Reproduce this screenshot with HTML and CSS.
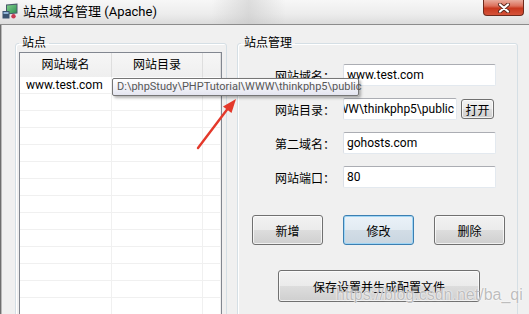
FILE: index.html
```html
<!DOCTYPE html>
<html lang="zh-CN">
<head>
<meta charset="UTF-8" />
<title>站点域名管理 (Apache)</title>
<link rel="stylesheet" href="styles.css">
</head>
<body>

<div class="window">
  <header class="titlebar">
    <svg class="app-icon" viewBox="0 0 16 16" aria-hidden="true">
      <defs>
        <linearGradient id="scr" x1="0" y1="0" x2="1" y2="1">
          <stop offset="0" stop-color="#7fd08a" />
          <stop offset="1" stop-color="#2f8f52" />
        </linearGradient>
      </defs>
      <path d="M4 1.5 L15.5 0.5 L15.5 10.5 L4 11.5 Z" fill="#4a5a6a" />
      <path d="M5 2.6 L14.5 1.8 L14.5 9.6 L5 10.4 Z" fill="url(#scr)" />
      <path d="M0.5 8 h7 v7.5 h-7 z" fill="#3a5470" />
      <path d="M1.5 9 h5 v2 h-5 z" fill="#8fb3d6" />
      <circle cx="11.5" cy="13.2" r="2.2" fill="#c93a52" />
    </svg>
    <span class="title">站点域名管理 (Apache)</span>
    <button class="close-btn" aria-label="关闭">
      <svg viewBox="0 0 14 10" aria-hidden="true">
        <path d="M3 1.5 L11 8.5 M11 1.5 L3 8.5" stroke="#5a2a20" stroke-width="4" stroke-linecap="round" />
        <path d="M3 1.5 L11 8.5 M11 1.5 L3 8.5" stroke="#fff" stroke-width="2.2" stroke-linecap="round" />
      </svg>
    </button>
  </header>

  <div class="client">
    <fieldset class="group sites">
      <legend>站点</legend>
      <div class="listview">
        <div class="lv-header">
          <span>网站域名</span>
          <span>网站目录</span>
          <span></span>
        </div>
        <div class="lv-row"><span>www.test.com</span><span></span><span></span></div>
        <div class="lv-row"><span></span><span></span><span></span></div>
        <div class="lv-row"><span></span><span></span><span></span></div>
        <div class="lv-row"><span></span><span></span><span></span></div>
        <div class="lv-row"><span></span><span></span><span></span></div>
        <div class="lv-row"><span></span><span></span><span></span></div>
        <div class="lv-row"><span></span><span></span><span></span></div>
        <div class="lv-row"><span></span><span></span><span></span></div>
        <div class="lv-row"><span></span><span></span><span></span></div>
        <div class="lv-row"><span></span><span></span><span></span></div>
        <div class="lv-row"><span></span><span></span><span></span></div>
        <div class="lv-row"><span></span><span></span><span></span></div>
        <div class="lv-row"><span></span><span></span><span></span></div>
        <div class="lv-row"><span></span><span></span><span></span></div>
      </div>
    </fieldset>

    <fieldset class="group manage">
      <legend>站点管理</legend>
      <div class="form">
        <div class="form-row">
          <label>网站域名：</label>
          <div class="textbox">www.test.com</div>
        </div>
        <div class="form-row">
          <label>网站目录：</label>
          <div class="field-group">
            <div class="textbox short"><span>D:\phpStudy\PHPTutorial\WWW\thinkphp5\public</span></div>
            <button class="btn open-btn">打开</button>
          </div>
        </div>
        <div class="form-row">
          <label>第二域名：</label>
          <div class="textbox">gohosts.com</div>
        </div>
        <div class="form-row">
          <label>网站端口：</label>
          <div class="textbox">80</div>
        </div>
      </div>

      <div class="actions">
        <button class="btn">新增</button>
        <button class="btn focused">修改</button>
        <button class="btn">删除</button>
      </div>

      <div class="save-row">
        <button class="btn save-btn">保存设置并生成配置文件</button>
      </div>
    </fieldset>
  </div>

  <!-- tooltip over the list -->
  <div class="tooltip">D:\phpStudy\PHPTutorial\WWW\thinkphp5\public</div>

  <svg class="arrow" viewBox="0 0 529 314" aria-hidden="true">
    <path d="M198 148 L229 107" stroke="#e4392b" stroke-width="2.4" stroke-linecap="round" />
    <path d="M236 99 L231.5 113 L223 106.5 Z" fill="#e4392b" />
  </svg>

  <div class="watermark">https://blog.csdn.net/ba_qi</div>
</div>

</body>
</html>
```

FILE: styles.css
```css
* { box-sizing: border-box; }
body {
  margin: 0;
  font-family: Roboto, "Noto Sans CJK SC", sans-serif;
  font-size: 12px;
  color: #000;
  background: #f0f0f0;
}
.window {
  position: relative;
  width: 529px; height: 314px;
  overflow: hidden;
  background: #f0f0f0;
}
/* Title bar */
.titlebar {
  height: 25px;
  display: flex; align-items: flex-start;
  border-bottom: 1px solid #8c8c8c;
  background:
    linear-gradient(90deg, rgba(255,255,255,0) 40%, rgba(190,190,190,0.45) 47%, rgba(255,255,255,0) 54%),
    linear-gradient(#f7f7f7, #ececec 60%, #dcdcdc);
}
.app-icon { width: 16px; height: 16px; margin: 3px 0 0 2px; flex: none; }
.title {
  font-size: 13px; line-height: 17px;
  margin: 3px 0 0 5px;
  color: #000;
}
.close-btn {
  margin-left: auto; margin-right: 5px;
  width: 41px; height: 16px;
  padding: 0;
  border: 1px solid #6e2a1c; border-top: none;
  border-radius: 0 0 4px 4px;
  background: linear-gradient(#e9ab9c, #dc705b 40%, #c8381e 55%, #d5533a);
  display: flex; align-items: center; justify-content: center;
}
.close-btn svg { width: 14px; height: 10px; }
/* Client area */
.client {
  display: flex; gap: 10px;
  padding: 10px 0 0 15px;
  height: 289px;
  box-shadow: inset 1px 0 #6f6f6f, inset 2px 0 #b9b9b9;
}
.group {
  margin: 0;
  padding: 0 3px;
  border: 1px solid #d5dfe5;
  border-radius: 3px;
  box-shadow: inset 1px 1px #fff;
  min-width: 0;
}
.group legend {
  padding: 0 3px;
  font-size: 12px; line-height: 16px;
}
.sites { width: 212px; height: 300px; }
.manage { width: 281px; height: 300px; }
/* List view */
.listview {
  margin-top: 1px;
  width: 203px;
  border: 1px solid #828790;
  background: #fff;
  height: 300px;
}
.lv-header, .lv-row {
  display: grid;
  grid-template-columns: 92px 91px 1fr;
}
.lv-header {
  height: 24px;
  background: linear-gradient(#f6f6f6, #efefef);
}
.lv-header span {
  text-align: center; line-height: 24px;
  border-right: 1px solid #dedede;
}
.lv-row { height: 17px; border-bottom: 1px solid #f0f0f0; }
.lv-row span {
  padding-left: 6px;
  line-height: 16px;
  border-right: 1px solid #f0f0f0;
  color: #000;
}
/* Form */
.form {
  display: flex; flex-direction: column; gap: 12px;
  padding-top: 13px;
}
.form-row { display: flex; align-items: center; gap: 8px; }
.form-row label { width: 94px; text-align: right; }
.field-group { display: flex; align-items: center; gap: 4px; }
.textbox {
  width: 153px; height: 22px;
  background: #fff;
  border: 1px solid #e3e9ef;
  border-top-color: #abadb3; border-left-color: #dbdfe6;
  border-radius: 2px;
  padding: 0 3px;
  line-height: 20px;
  white-space: nowrap; overflow: hidden;
}
.textbox.short {
  width: 114px;
  display: flex; justify-content: flex-end;
  padding-right: 2px;
}
.textbox.short span { flex: none; }
/* Buttons */
.btn {
  font-family: inherit; font-size: 12px; color: #000;
  padding: 0;
  border: 1px solid #707070;
  border-radius: 3px;
  background: linear-gradient(#f2f2f2, #ebebeb 50%, #dddddd 50%, #cfcfcf);
  box-shadow: inset 0 0 0 1px rgba(255,255,255,0.7);
}
.btn.focused {
  border-color: #3c7fb1;
  background: linear-gradient(#eaf2f8, #e2ebf2 50%, #d2dde6 50%, #c9d6e0);
  box-shadow: inset 0 0 0 1px #9fd5f5;
}
.open-btn { width: 33px; height: 20px; }
.actions {
  display: flex; gap: 20px;
  padding-left: 11px;
  margin-top: 27px;
}
.actions .btn { width: 71px; height: 30px; }
.save-row { padding-left: 37px; margin-top: 25px; }
.save-btn { width: 202px; height: 32px; }
/* Overlays */
.tooltip {
  position: absolute; left: 112px; top: 78px;
  width: 247px; height: 18px;
  padding: 0 4px;
  font-size: 11px;
  line-height: 16px;
  white-space: nowrap;
  color: #575757;
  border: 1px solid #767676;
  border-radius: 2px;
  background: linear-gradient(#ffffff, #e4e5f0);
  box-shadow: 2px 2px 3px rgba(0,0,0,0.3);
}
.arrow {
  position: absolute; left: 0; top: 0;
  width: 529px; height: 314px;
  pointer-events: none;
}
.watermark {
  position: absolute; left: 336px; top: 286px;
  font-family: "Liberation Sans", sans-serif;
  font-size: 16px;
  color: rgba(185,185,185,0.95);
  text-shadow: 0 0 2px #fff, 0 0 1px #fff;
  pointer-events: none;
}
```
